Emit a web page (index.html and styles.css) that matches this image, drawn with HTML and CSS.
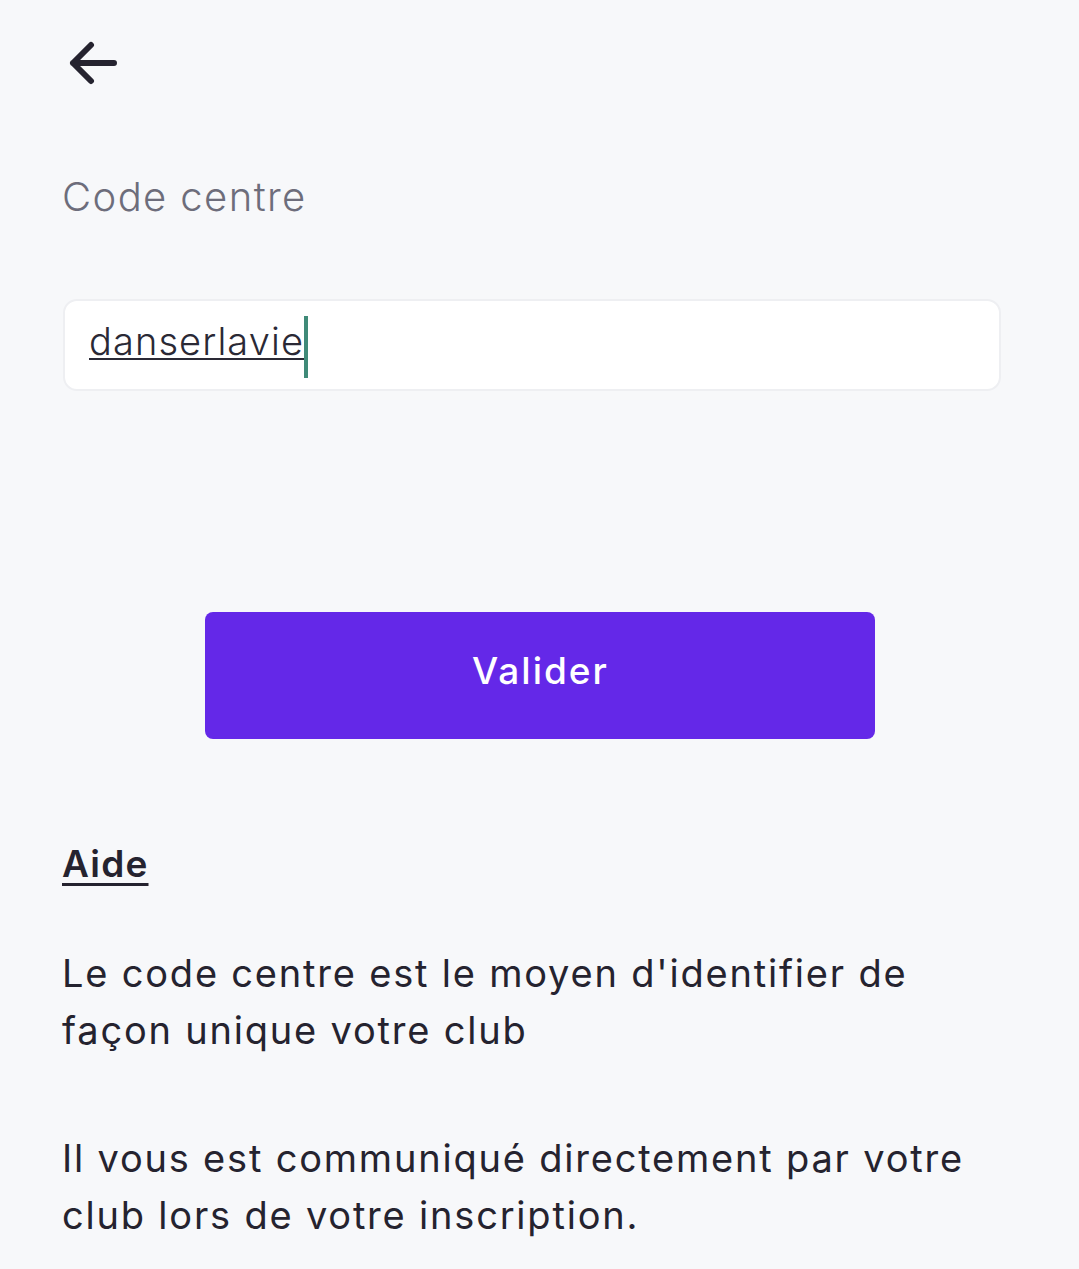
FILE: index.html
```html
<!DOCTYPE html>
<html lang="fr">
<head>
<meta charset="utf-8">
<link rel="stylesheet" href="styles.css">
</head>
<body>
<div class="page">
  <header class="top">
    <button class="back" aria-label="Retour">
      <svg width="54" height="46" viewBox="0 0 54 46"><path d="M47 22 H6 M24 4 L6 22 L24 40" fill="none" stroke="#25232f" stroke-width="6" stroke-linecap="round" stroke-linejoin="round"/></svg>
    </button>
  </header>
  <label class="label">Code centre</label>
  <div class="field">
    <span class="value">danserlavie</span><span class="caret"></span>
  </div>
  <div class="actions">
    <button class="btn">Valider</button>
  </div>
  <section class="help">
    <h2 class="help-title">Aide</h2>
    <p class="help-text">Le code centre est le moyen d'identifier de façon unique votre club</p>
    <p class="help-text">Il vous est communiqué directement par votre club lors de votre inscription.</p>
  </section>
</div>
</body>
</html>
```
FILE: styles.css
```css
* { box-sizing: border-box; }
html, body { margin: 0; padding: 0; }
body {
  background: #f7f8fa;
  font-family: "Inter", "Noto Sans", sans-serif;
  color: #25232f;
  width: 1079px;
  height: 1269px;
  overflow: hidden;
}
.page {
  padding: 0 70px 0 62px;
  display: flex;
  flex-direction: column;
}
.top {
  height: 172px;
  display: flex;
  align-items: flex-start;
  padding-top: 41px;
}
.back {
  border: 0;
  background: none;
  padding: 0;
  margin-left: 5px;
  width: 54px;
  height: 46px;
  display: block;
}
.back svg { display: block; }
.label {
  font-size: 40px;
  font-weight: 300;
  color: #6d6d7b;
  line-height: 50px;
  height: 50px;
  letter-spacing: 1.4px;
}
.field {
  margin-top: 77px;
  margin-left: 1px;
  margin-right: 8px;
  height: 92px;
  background: #ffffff;
  border: 2px solid #eeeff2;
  border-radius: 14px;
  padding: 0 0 0 24px;
  display: flex;
  align-items: center;
}
.value {
  font-size: 38px;
  font-weight: 300;
  color: #2a2935;
  text-decoration: underline;
  text-decoration-thickness: 2px;
  text-underline-offset: 3px;
  letter-spacing: 1.1px;
  margin-top: -8px;
  margin-right: -1px;
}
.caret {
  display: inline-block;
  width: 4px;
  height: 62px;
  background: #3f8a78;
  margin-left: 1px;
  margin-top: 4px;
}
.actions {
  display: flex;
  justify-content: center;
  margin-top: 221px;
  padding-left: 8px;
}
.btn {
  width: 670px;
  height: 127px;
  background: #6428e8;
  border: 0;
  border-radius: 8px;
  color: #ffffff;
  font-family: "Inter", "Noto Sans", sans-serif;
  font-size: 37px;
  font-weight: 500;
  letter-spacing: 2px;
  padding: 0 0 10px 2px;
}
.help { margin-top: 100px; }
.help-title {
  margin: 0;
  font-size: 37px;
  font-weight: 600;
  line-height: 50px;
  letter-spacing: 1.2px;
  text-decoration: underline;
  text-decoration-thickness: 3px;
  text-underline-offset: 6px;
}
.help-text {
  margin: 56px 0 0;
  font-size: 38px;
  font-weight: 400;
  line-height: 57px;
  letter-spacing: 1.8px;
  color: #25232f;
}
.help-text + .help-text { margin-top: 71px; }
```
